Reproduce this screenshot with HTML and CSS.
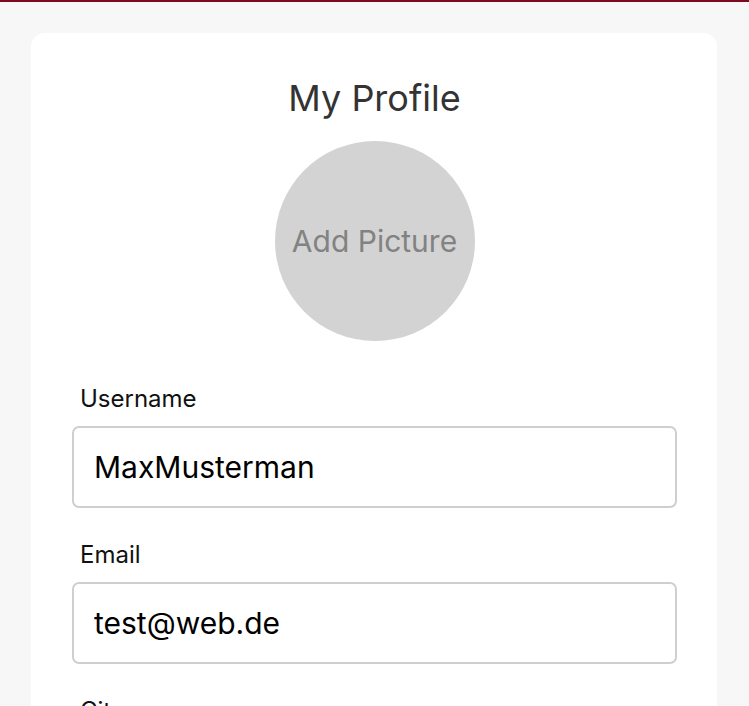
FILE: index.html
```html
<!DOCTYPE html>
<html>
<head>
<meta charset="utf-8">
<link rel="stylesheet" href="styles.css">
</head>
<body>
<div class="topline"></div>
<main class="page">
  <section class="card">
    <h1 class="title">My Profile</h1>
    <div class="avatar">Add Picture</div>
    <form class="form">
      <label class="field">
        <span class="label">Username</span>
        <input class="input" type="text" value="MaxMusterman">
      </label>
      <label class="field">
        <span class="label">Email</span>
        <input class="input" type="text" value="test@web.de">
      </label>
      <label class="field">
        <span class="label">City</span>
        <input class="input" type="text" value="">
      </label>
    </form>
  </section>
</main>
</body>
</html>
```

FILE: styles.css
```css
* { box-sizing: border-box; }
html, body {
  margin: 0;
  padding: 0;
  background: #f7f7f7;
  font-family: Inter, "Noto Sans", "Liberation Sans", sans-serif;
  overflow: hidden;
  height: 706px;
}
.topline {
  height: 2px;
  background: #7d0a1f;
}
.page {
  padding: 31px 32px 0 31px;
}
.card {
  background: #fff;
  border-radius: 14px;
  padding: 43px 40px 40px 41px;
  display: flex;
  flex-direction: column;
  align-items: center;
}
.title {
  margin: 0;
  font-size: 36px;
  line-height: 44px;
  font-weight: 400;
  color: #333;
}
.avatar {
  margin-top: 21px;
  width: 200px;
  height: 200px;
  border-radius: 50%;
  background: #d3d3d3;
  color: #828282;
  font-size: 30px;
  display: flex;
  align-items: center;
  justify-content: center;
}
.form {
  align-self: stretch;
  margin-top: 43px;
  display: flex;
  flex-direction: column;
  gap: 32px;
}
.field {
  display: flex;
  flex-direction: column;
  gap: 13px;
}
.label {
  padding-left: 8px;
  font-size: 24px;
  line-height: 29px;
  color: #111;
}
.input {
  height: 82px;
  border: 2px solid #cfcfcf;
  border-radius: 7px;
  padding: 0 20px;
  font-family: inherit;
  font-size: 30px;
  color: #000;
  background: #fff;
  outline: none;
}
```
